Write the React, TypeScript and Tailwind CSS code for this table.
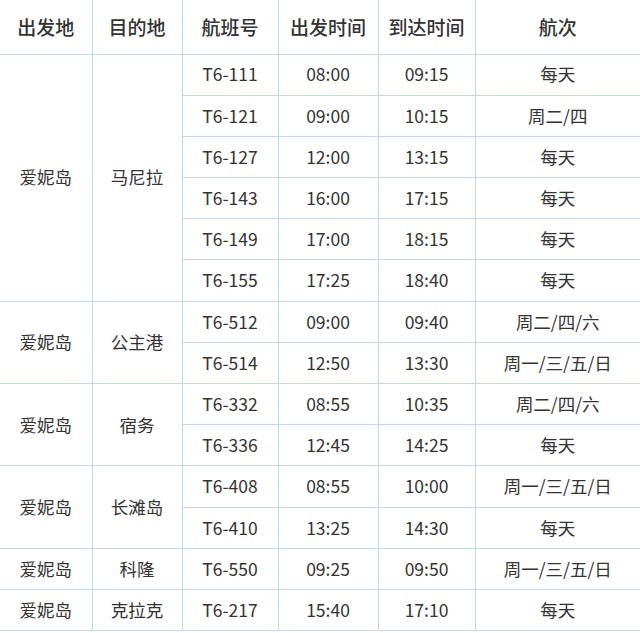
import React from "react"

type Flight = { no: string; dep: string; arr: string; freq: string }
type Group = { from: string; to: string; flights: Flight[] }

const groups: Group[] = [
  {
    from: "爱妮岛",
    to: "马尼拉",
    flights: [
      { no: "T6-111", dep: "08:00", arr: "09:15", freq: "每天" },
      { no: "T6-121", dep: "09:00", arr: "10:15", freq: "周二/四" },
      { no: "T6-127", dep: "12:00", arr: "13:15", freq: "每天" },
      { no: "T6-143", dep: "16:00", arr: "17:15", freq: "每天" },
      { no: "T6-149", dep: "17:00", arr: "18:15", freq: "每天" },
      { no: "T6-155", dep: "17:25", arr: "18:40", freq: "每天" },
    ],
  },
  {
    from: "爱妮岛",
    to: "公主港",
    flights: [
      { no: "T6-512", dep: "09:00", arr: "09:40", freq: "周二/四/六" },
      { no: "T6-514", dep: "12:50", arr: "13:30", freq: "周一/三/五/日" },
    ],
  },
  {
    from: "爱妮岛",
    to: "宿务",
    flights: [
      { no: "T6-332", dep: "08:55", arr: "10:35", freq: "周二/四/六" },
      { no: "T6-336", dep: "12:45", arr: "14:25", freq: "每天" },
    ],
  },
  {
    from: "爱妮岛",
    to: "长滩岛",
    flights: [
      { no: "T6-408", dep: "08:55", arr: "10:00", freq: "周一/三/五/日" },
      { no: "T6-410", dep: "13:25", arr: "14:30", freq: "每天" },
    ],
  },
  {
    from: "爱妮岛",
    to: "科隆",
    flights: [{ no: "T6-550", dep: "09:25", arr: "09:50", freq: "周一/三/五/日" }],
  },
  {
    from: "爱妮岛",
    to: "克拉克",
    flights: [{ no: "T6-217", dep: "15:40", arr: "17:10", freq: "每天" }],
  },
]

const headers = ["出发地", "目的地", "航班号", "出发时间", "到达时间", "航次"]

export default function App() {
  const cell = "border-b border-r border-[#c4d6ee] text-center align-middle p-0"
  return (
    <div className="w-[640px] h-[633px] overflow-hidden bg-white text-[#333] font-['Noto_Sans_CJK_SC',sans-serif]">
      <table className="w-[640px] table-fixed border-collapse">
        <colgroup>
          <col className="w-[92px]" />
          <col className="w-[90px]" />
          <col className="w-[96px]" />
          <col className="w-[100px]" />
          <col className="w-[97px]" />
          <col className="w-[165px]" />
        </colgroup>
        <thead>
          <tr className="h-[54px]">
            {headers.map((h, i) => (
              <th key={h} className={`${cell} text-[19px] font-medium ${i === 5 ? "border-r-0" : ""}`}>
                {h}
              </th>
            ))}
          </tr>
        </thead>
        <tbody className="text-[17.5px]">
          {groups.map((g) =>
            g.flights.map((f, j) => (
              <tr key={f.no} className="h-[41.2px]">
                {j === 0 && (
                  <>
                    <td rowSpan={g.flights.length} className={cell}>
                      {g.from}
                    </td>
                    <td rowSpan={g.flights.length} className={cell}>
                      {g.to}
                    </td>
                  </>
                )}
                <td className={cell}>{f.no}</td>
                <td className={cell}>{f.dep}</td>
                <td className={cell}>{f.arr}</td>
                <td className={`${cell} border-r-0`}>{f.freq}</td>
              </tr>
            ))
          )}
        </tbody>
      </table>
    </div>
  )
}
